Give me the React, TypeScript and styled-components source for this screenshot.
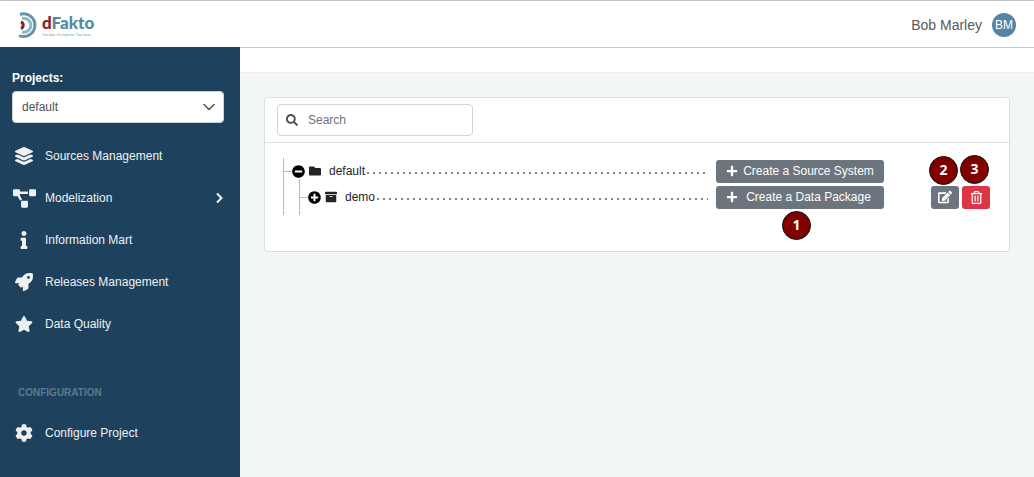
import React from "react";
import styled, { createGlobalStyle, css } from "styled-components";
import {
  FaLayerGroup,
  FaProjectDiagram,
  FaInfo,
  FaRocket,
  FaStar,
  FaCog,
  FaSearch,
  FaFolder,
  FaArchive,
  FaPlus,
  FaEdit,
  FaRegTrashAlt,
  FaMinusCircle,
  FaPlusCircle,
} from "react-icons/fa";

const GlobalStyle = createGlobalStyle`
  *, *::before, *::after { box-sizing: border-box; }
  body {
    margin: 0;
    background: #f2f6f7;
    color: #212529;
    font-family: "Liberation Sans", Arial, sans-serif;
    font-size: 12px;
    line-height: 18px;
  }
  button, input, select { font: inherit; margin: 0; }
  button { cursor: pointer; }
  svg { display: block; }
`;

const Page = styled.div`
  min-height: 100vh;
  display: flex;
  flex-direction: column;
`;

const Header = styled.header`
  display: flex;
  align-items: center;
  justify-content: space-between;
  height: 47px;
  padding: 1px 18px 0;
  background: #fff;
  border-top: 1px solid #c0c0c0;
`;

const User = styled.div`
  display: flex;
  align-items: center;
  gap: 10px;
  color: #595959;
  font-size: 14px;
`;

const Avatar = styled.span`
  display: flex;
  align-items: center;
  justify-content: center;
  width: 24px;
  height: 24px;
  border-radius: 50%;
  background: #5585a6;
  color: #fff;
  font-size: 12px;
`;

const Body = styled.div`
  flex: 1;
  display: flex;
`;

const Sidebar = styled.aside`
  flex: none;
  width: 240px;
  padding: 22px 0 20px;
  background: #1e425d;
  color: #f0f0f0;
`;

const ProjectField = styled.div`
  display: flex;
  flex-direction: column;
  gap: 4px;
  padding: 0 16px 0 12px;
  margin-bottom: 12px;
`;

const ProjectLabel = styled.label`
  color: #fff;
  font-weight: bold;
`;

const SelectBox = styled.div`
  display: grid;
  align-items: center;

  > * { grid-area: 1 / 1; }
  > svg { justify-self: end; margin-right: 9px; pointer-events: none; }
`;

const Select = styled.select`
  appearance: none;
  width: 100%;
  height: 32px;
  padding: 0 32px 0 9px;
  border: 1px solid #ced4da;
  border-radius: 4px;
  background: #fff;
  color: #495057;
`;

const Menu = styled.nav`
  display: flex;
  flex-direction: column;
`;

const MenuLink = styled.a`
  display: grid;
  grid-template-columns: 24px 1fr auto;
  align-items: center;
  column-gap: 9px;
  height: 42px;
  padding: 0 16px 0 12px;
  color: #f0f0f0;
  text-decoration: none;

  > svg:first-child { justify-self: center; }
`;

const MenuHeading = styled.h2`
  margin: 39px 18px 10px;
  color: #5b7a90;
  font-size: 10px;
  line-height: 18px;
  font-weight: bold;
`;

const Main = styled.main`
  flex: 1;
  min-width: 0;
`;

const Crumbs = styled.div`
  height: 26px;
  background: #fff;
  border-top: 1px solid #c8c8c8;
  border-bottom: 1px solid #ebedef;
`;

const Card = styled.section`
  margin: 24px;
  background: #fff;
  border: 1px solid #dcdfe1;
  border-radius: 3px;
`;

const CardHead = styled.div`
  padding: 6px 12px;
  border-bottom: 1px solid #dfe1e3;
`;

const SearchBox = styled.label`
  display: flex;
  align-items: center;
  gap: 10px;
  width: 196px;
  height: 32px;
  padding: 0 8px;
  border: 1px solid #ced4da;
  border-radius: 4px;
  color: #495057;

  > svg { flex: none; }
`;

const SearchInput = styled.input`
  flex: 1;
  min-width: 0;
  padding: 0;
  border: 0;
  outline: 0;
  background: transparent;
  color: #495057;

  &::placeholder { color: #6c757d; opacity: 1; }
`;

const CardBody = styled.div`
  padding: 15px 19px 36px 18px;
`;

const branch = css`
  margin: 0;
  padding: 0;
  list-style: none;
`;

const Tree = styled.ul`
  ${branch}
  border-left: 1px solid #bbb;
`;

const SubTree = styled.ul`
  ${branch}
  position: relative;
  margin-left: 15px;
  padding: 0 0 5px 1px;

  &::before {
    content: "";
    position: absolute;
    top: -5px;
    bottom: 0;
    left: 0;
    border-left: 1px solid #bbb;
  }
`;

const Row = styled.div`
  display: flex;
  align-items: center;
  height: 26px;
`;

const Twig = styled.span`
  width: 8px;
  height: 1px;
  background: #bbb;
`;

const Toggle = styled.button`
  padding: 0;
  border: 0;
  background: none;
  color: #000;
`;

const NodeName = styled.span`
  display: flex;
  align-items: center;
  gap: 8px;
  margin-left: 4px;
`;

const Leader = styled.span`
  flex: 1;
  height: 2px;
  margin: 4px 8px 0 2px;
  background: repeating-linear-gradient(to right, #858585 0 2px, transparent 2px 6px);
`;

const Anchor = styled.span`
  position: relative;
  display: flex;
`;

const Actions = styled.span`
  display: flex;
  justify-content: flex-end;
  gap: 3px;
  width: 106px;
`;

const Button = styled.button<{ $danger?: boolean; $wide?: boolean }>`
  display: flex;
  align-items: center;
  justify-content: ${(p) => (p.$wide ? "flex-start" : "center")};
  gap: 5px;
  width: ${(p) => (p.$wide ? 168 : 28)}px;
  height: 23px;
  padding: ${(p) => (p.$wide ? "0 10px" : "0")};
  border: 0;
  border-radius: 3px;
  background: ${(p) => (p.$danger ? "#dc3545" : "#6c757d")};
  color: #fff;
  white-space: nowrap;

  > svg { flex: none; }
  > span { flex: 1; text-align: center; }
`;

const Callout = styled.span<{ $x: number; $y: number }>`
  position: absolute;
  left: ${(p) => p.$x}px;
  top: ${(p) => p.$y}px;
  display: flex;
  align-items: center;
  justify-content: center;
  width: 29px;
  height: 29px;
  border: 1px solid #111;
  border-radius: 50%;
  background: #800000;
  color: #fff;
  font-family: "Open Sans", sans-serif;
  font-size: 14px;
  font-weight: bold;
`;

const Logo = () => (
  <svg width="84" height="30" viewBox="0 0 84 30" role="img" aria-label="dFakto">
    <g fill="none">
      <path d="M2 4.500A11.300 11.300 0 1 1 1 25.500" stroke="#5f97aa" strokeWidth="3" />
      <path d="M4 8.500A7 7 0 1 1 4 22" stroke="#8fb6c3" strokeWidth="3" />
      <path d="M3 12A3.500 3.500 0 0 1 3 18.500" stroke="#85202c" strokeWidth="3" />
    </g>
    <text x="24" y="19" fontFamily="Lato, sans-serif" fontWeight="900" fontSize="17" fill="#4f8a9f">
      <tspan fill="#85202c">d</tspan>Fakto
    </text>
    <text x="24" y="26" fontFamily="Liberation Sans, sans-serif" fontSize="3" fill="#5f97aa">
      Your data. Our expertise. Your future.
    </text>
  </svg>
);

const menu = [
  { label: "Sources Management", icon: <FaLayerGroup size={18} /> },
  { label: "Modelization", icon: <FaProjectDiagram size={23} />, more: true },
  { label: "Information Mart", icon: <FaInfo size={18} /> },
  { label: "Releases Management", icon: <FaRocket size={18} /> },
  { label: "Data Quality", icon: <FaStar size={18} /> },
];

export default function App() {
  return (
    <Page>
      <GlobalStyle />
      <Header>
        <Logo />
        <User>
          Bob Marley
          <Avatar>BM</Avatar>
        </User>
      </Header>
      <Body>
        <Sidebar>
          <ProjectField>
            <ProjectLabel htmlFor="project">Projects:</ProjectLabel>
            <SelectBox>
              <Select id="project">
                <option>default</option>
              </Select>
              <svg width="12" height="8" viewBox="0 0 12 8" fill="none" stroke="#495057" strokeWidth="1.500" strokeLinecap="round">
                <path d="M1 1.500 6 6.500 11 1.500" />
              </svg>
            </SelectBox>
          </ProjectField>
          <Menu>
            {menu.map((m) => (
              <MenuLink key={m.label} href="#">
                {m.icon}
                {m.label}
                {m.more && (
                  <svg width="9" height="12" viewBox="0 0 9 12" fill="none" stroke="#f0f0f0" strokeWidth="2">
                    <path d="M2 1.500 6.500 6 2 10.500" />
                  </svg>
                )}
              </MenuLink>
            ))}
            <MenuHeading>CONFIGURATION</MenuHeading>
            <MenuLink href="#">
              <FaCog size={18} />
              Configure Project
            </MenuLink>
          </Menu>
        </Sidebar>
        <Main>
          <Crumbs />
          <Card>
            <CardHead>
              <SearchBox>
                <FaSearch size={12} />
                <SearchInput type="text" placeholder="Search" aria-label="Search" />
              </SearchBox>
            </CardHead>
            <CardBody>
              <Tree>
                <li>
                  <Row>
                    <Twig />
                    <Toggle aria-label="Collapse default">
                      <FaMinusCircle size={13} />
                    </Toggle>
                    <NodeName>
                      <FaFolder size={12} />
                      default
                    </NodeName>
                    <Leader />
                    <Button $wide>
                      <FaPlus size={12} />
                      <span>Create a Source System</span>
                    </Button>
                    <Actions />
                  </Row>
                  <SubTree>
                    <li>
                      <Row>
                        <Twig />
                        <Toggle aria-label="Expand demo">
                          <FaPlusCircle size={13} />
                        </Toggle>
                        <NodeName>
                          <FaArchive size={12} />
                          demo
                        </NodeName>
                        <Leader />
                        <Anchor>
                          <Button $wide>
                            <FaPlus size={12} />
                            <span>Create a Data Package</span>
                          </Button>
                          <Callout $x={66} $y={25}>1</Callout>
                        </Anchor>
                        <Actions>
                          <Anchor>
                            <Button aria-label="Edit">
                              <FaEdit size={14} />
                            </Button>
                            <Callout $x={-2} $y={-30}>2</Callout>
                          </Anchor>
                          <Anchor>
                            <Button $danger aria-label="Delete">
                              <FaRegTrashAlt size={13} />
                            </Button>
                            <Callout $x={-2} $y={-31}>3</Callout>
                          </Anchor>
                        </Actions>
                      </Row>
                    </li>
                  </SubTree>
                </li>
              </Tree>
            </CardBody>
          </Card>
        </Main>
      </Body>
    </Page>
  );
}
